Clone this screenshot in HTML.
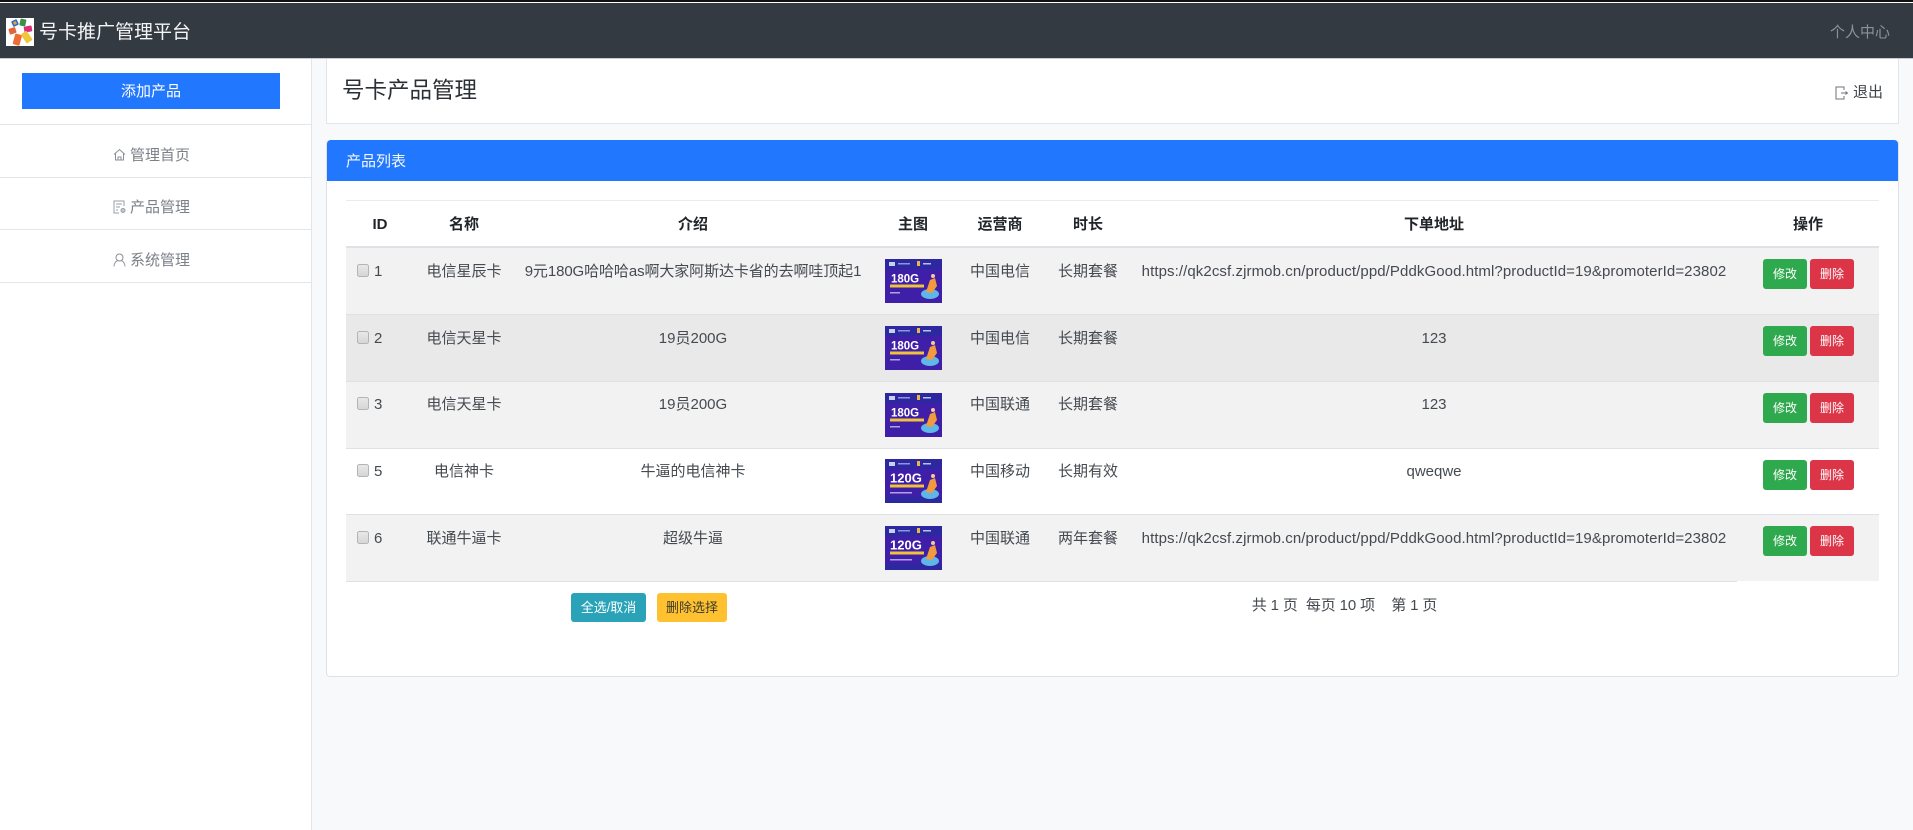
<!DOCTYPE html>
<html lang="zh">
<head>
<meta charset="utf-8">
<title>号卡产品管理</title>
<style>
html,body{margin:0;padding:0}
body{width:1913px;height:830px;position:relative;overflow:hidden;background:#f8f9fa;font-family:"Liberation Sans","Noto Sans CJK SC",sans-serif;font-size:15px;color:#212529}
.a{position:absolute;box-sizing:border-box}
.t{position:absolute;white-space:nowrap;line-height:20px;height:20px}
.c{position:absolute;white-space:nowrap;line-height:20px;height:20px;transform:translateX(-50%)}
.th{font-weight:700;color:#212529;margin-top:1px}
.td{color:#454a50;margin-top:1px}
.url{letter-spacing:.085px}
.row{position:absolute;left:346px;width:1533px}
.cb{position:absolute;width:12px;height:13px;left:357px;box-sizing:border-box;border:1px solid #b4b4b4;border-radius:2.5px;background:linear-gradient(#e8e8e8,#d6d6d6)}
.b{position:absolute;box-sizing:border-box;border-radius:3px;text-align:center;color:#fff;font-size:12px;line-height:31px;height:30px;width:44px}
.g{background:#2fa94e}.r{background:#dc3548}
.line{position:absolute;left:0;width:311px;height:1px;background:#e3e6e8}
.m{color:#7b8188;margin-top:1px}
svg{position:absolute;display:block}
svg.p{filter:blur(.3px)}
</style>
</head>
<body>
<div class="a" style="left:0;top:0;width:1913px;height:2px;background:#111"></div>
<div class="a" style="left:0;top:2px;width:1913px;height:1px;background:#fff"></div>
<div class="a" style="left:0;top:3px;width:1913px;height:55px;background:#343a42"></div>
<div class="a" style="left:0;top:58px;width:1913px;height:1px;background:#c9cccf"></div>

<svg style="left:6px;top:18px" width="28" height="28" viewBox="0 0 28 28">
<rect width="28" height="28" fill="#fff"/>
<rect x="6" y="2" width="6" height="6" rx="1" fill="#2b6cc4" transform="rotate(-25 9 5)"/>
<rect x="7.5" y="3.5" width="3" height="3" fill="#e8a33a" transform="rotate(-25 9 5)"/>
<rect x="14" y="1" width="6" height="7" rx="1" fill="#3c8f4a" transform="rotate(12 17 4)"/>
<rect x="18" y="8" width="8" height="6" rx="1" fill="#d8307c" transform="rotate(-10 22 11)"/>
<rect x="3" y="10" width="7" height="6" rx="1" fill="#e0653a" transform="rotate(-18 6 13)"/>
<rect x="8" y="16" width="7" height="11" rx="1" fill="#ef6b35" transform="rotate(15 11 21)"/>
<rect x="17" y="14" width="7" height="11" rx="1" fill="#f0c63c" transform="rotate(-35 20 19)"/>
</svg>
<div class="t" style="left:39px;top:21px;font-size:19px;line-height:23px;height:23px;color:#f4f5f6">号卡推广管理平台</div>
<div class="t" style="left:1830px;top:23px;color:#8e9296">个人中心</div>

<!-- Sidebar -->
<div class="a" style="left:0;top:59px;width:312px;height:771px;background:#fff;border-right:1px solid #e3e6e8"></div>
<div class="a" style="left:22px;top:73px;width:258px;height:36px;background:#2277ff"></div>
<div class="c" style="left:151px;top:82px;color:#fff">添加产品</div>
<div class="line" style="top:124px"></div>
<div class="line" style="top:177px"></div>
<div class="line" style="top:229px"></div>
<div class="line" style="top:282px"></div>

<svg style="left:113px;top:148px" width="13" height="13" viewBox="0 0 13 13" fill="none" stroke="#8b9096" stroke-width="1">
<path d="M1 6.5 6.5 1.5 12 6.5M2.5 5.5V12H10.5V5.5M5 12V9H8V12"/>
</svg>
<div class="t m" style="left:130px;top:145px">管理首页</div>
<svg style="left:113px;top:200px" width="13" height="14" viewBox="0 0 13 14" fill="none" stroke="#9a9fa5" stroke-width="1">
<path d="M11 6V1H1V13H6M3 4H9M3 7H7M3 10H5"/><circle cx="10" cy="10.5" r="2" fill="#c4c7cb"/>
</svg>
<div class="t m" style="left:130px;top:197px">产品管理</div>
<svg style="left:113px;top:253px" width="13" height="14" viewBox="0 0 13 14" fill="none" stroke="#8b9096" stroke-width="1">
<circle cx="6.5" cy="4.5" r="3.5"/><path d="M1 13.5C1 10 3.2 8 4.6 7.6M12 13.5C12 10 9.8 8 8.4 7.6"/>
</svg>
<div class="t m" style="left:130px;top:250px">系统管理</div>

<!-- Page header -->
<div class="a" style="left:326px;top:59px;width:1573px;height:65px;background:#fff;border:1px solid #e3e6e8;border-top:0"></div>
<div class="t" style="left:342px;top:77px;font-size:22.5px;line-height:28px;height:28px;color:#2b3036">号卡产品管理</div>
<svg style="left:1835px;top:86px" width="13" height="14" viewBox="0 0 13 14" fill="none" stroke="#6f747a" stroke-width="1">
<path d="M9 4V1H1V13H9V10M6 7H12.5M10.5 5.5 12.5 7 10.5 8.5"/>
</svg>
<div class="t" style="left:1853px;top:83px;color:#3f444a">退出</div>

<!-- Card -->
<div class="a" style="left:326px;top:140px;width:1573px;height:537px;background:#fff;border:1px solid #dfe2e5;border-radius:4px"></div>
<div class="a" style="left:327px;top:140px;width:1571px;height:41px;background:#2277ff;border-radius:4px 4px 0 0"></div>
<div class="t" style="left:346px;top:152px;color:#f4f8ff">产品列表</div>

<div class="a" style="left:346px;top:200px;width:1533px;height:1px;background:#e9ecef"></div>
<div class="a" style="left:346px;top:246px;width:1533px;height:2px;background:#dee2e6"></div>

<div class="c th" style="left:380px;top:214px">ID</div>
<div class="c th" style="left:464px;top:214px">名称</div>
<div class="c th" style="left:693px;top:214px">介绍</div>
<div class="c th" style="left:913px;top:214px">主图</div>
<div class="c th" style="left:1000px;top:214px">运营商</div>
<div class="c th" style="left:1088px;top:214px">时长</div>
<div class="c th" style="left:1434px;top:214px">下单地址</div>
<div class="c th" style="left:1808px;top:214px">操作</div>

<!-- Rows -->
<div class="row" style="top:248px;height:66px;background:#f2f2f2"></div>
<div class="row" style="top:314px;height:67px;background:#e9e9e9;border-top:1px solid #dee2e6;box-sizing:border-box"></div>
<div class="row" style="top:381px;height:67px;background:#f2f2f2;border-top:1px solid #dee2e6;box-sizing:border-box"></div>
<div class="row" style="top:448px;height:66px;background:#fff;border-top:1px solid #dee2e6;box-sizing:border-box"></div>
<div class="row" style="top:514px;height:67px;background:#f2f2f2;border-top:1px solid #dee2e6;box-sizing:border-box"></div>
<div class="a" style="left:346px;top:581px;width:1391px;height:1px;background:#dee2e6"></div>

<!-- Row 1 -->
<div class="cb" style="top:264px"></div><div class="t td" style="left:374px;top:261px">1</div>
<div class="c td" style="left:464px;top:261px">电信星辰卡</div>
<div class="c td" style="left:693px;top:261px;letter-spacing:-.1px">9元180G哈哈哈as啊大家阿斯达卡省的去啊哇顶起1</div>
<svg class="p" style="left:885px;top:259px" width="57" height="44" viewBox="0 0 57 44"><rect width="57" height="44" fill="#3f1fa8"/><rect width="57" height="10" fill="#2d27a0"/><rect x="4" y="3" width="6" height="4" fill="#c8d0f0"/><rect x="13" y="4" width="12" height="1.5" fill="#8d96dc"/><rect x="32" y="2" width="3" height="5" fill="#e9b44c"/><rect x="38" y="4" width="8" height="1.5" fill="#b8c0ec"/><text x="6" y="23.5" font-family="Liberation Sans" font-size="11.5" font-weight="700" fill="#fff">180G</text><rect x="5" y="25.5" width="34" height="3" fill="#f0c23c"/><rect x="5" y="33" width="10" height="1.5" fill="#a9a6e4"/><ellipse cx="45" cy="35" rx="9" ry="5" fill="#5fb6e8"/><path d="M41 33 45 21 50 19 52 27 47 34Z" fill="#f29a3e"/><circle cx="48" cy="17" r="2" fill="#f4c9a0"/></svg>
<div class="c td" style="left:1000px;top:261px">中国电信</div>
<div class="c td" style="left:1088px;top:261px">长期套餐</div>
<div class="c td url" style="left:1434px;top:261px">https://qk2csf.zjrmob.cn/product/ppd/PddkGood.html?productId=19&amp;promoterId=23802</div>
<div class="b g" style="left:1763px;top:259px">修改</div><div class="b r" style="left:1810px;top:259px">删除</div>

<!-- Row 2 -->
<div class="cb" style="top:331px"></div><div class="t td" style="left:374px;top:328px">2</div>
<div class="c td" style="left:464px;top:328px">电信天星卡</div>
<div class="c td" style="left:693px;top:328px">19员200G</div>
<svg class="p" style="left:885px;top:326px" width="57" height="44" viewBox="0 0 57 44"><rect width="57" height="44" fill="#3f1fa8"/><rect width="57" height="10" fill="#2d27a0"/><rect x="4" y="3" width="6" height="4" fill="#c8d0f0"/><rect x="13" y="4" width="12" height="1.5" fill="#8d96dc"/><rect x="32" y="2" width="3" height="5" fill="#e9b44c"/><rect x="38" y="4" width="8" height="1.5" fill="#b8c0ec"/><text x="6" y="23.5" font-family="Liberation Sans" font-size="11.5" font-weight="700" fill="#fff">180G</text><rect x="5" y="25.5" width="34" height="3" fill="#f0c23c"/><rect x="5" y="33" width="10" height="1.5" fill="#a9a6e4"/><ellipse cx="45" cy="35" rx="9" ry="5" fill="#5fb6e8"/><path d="M41 33 45 21 50 19 52 27 47 34Z" fill="#f29a3e"/><circle cx="48" cy="17" r="2" fill="#f4c9a0"/></svg>
<div class="c td" style="left:1000px;top:328px">中国电信</div>
<div class="c td" style="left:1088px;top:328px">长期套餐</div>
<div class="c td" style="left:1434px;top:328px">123</div>
<div class="b g" style="left:1763px;top:326px">修改</div><div class="b r" style="left:1810px;top:326px">删除</div>

<!-- Row 3 -->
<div class="cb" style="top:397px"></div><div class="t td" style="left:374px;top:394px">3</div>
<div class="c td" style="left:464px;top:394px">电信天星卡</div>
<div class="c td" style="left:693px;top:394px">19员200G</div>
<svg class="p" style="left:885px;top:393px" width="57" height="44" viewBox="0 0 57 44"><rect width="57" height="44" fill="#3f1fa8"/><rect width="57" height="10" fill="#2d27a0"/><rect x="4" y="3" width="6" height="4" fill="#c8d0f0"/><rect x="13" y="4" width="12" height="1.5" fill="#8d96dc"/><rect x="32" y="2" width="3" height="5" fill="#e9b44c"/><rect x="38" y="4" width="8" height="1.5" fill="#b8c0ec"/><text x="6" y="23.5" font-family="Liberation Sans" font-size="11.5" font-weight="700" fill="#fff">180G</text><rect x="5" y="25.5" width="34" height="3" fill="#f0c23c"/><rect x="5" y="33" width="10" height="1.5" fill="#a9a6e4"/><ellipse cx="45" cy="35" rx="9" ry="5" fill="#5fb6e8"/><path d="M41 33 45 21 50 19 52 27 47 34Z" fill="#f29a3e"/><circle cx="48" cy="17" r="2" fill="#f4c9a0"/></svg>
<div class="c td" style="left:1000px;top:394px">中国联通</div>
<div class="c td" style="left:1088px;top:394px">长期套餐</div>
<div class="c td" style="left:1434px;top:394px">123</div>
<div class="b g" style="left:1763px;top:393px">修改</div><div class="b r" style="left:1810px;top:393px">删除</div>

<!-- Row 5 -->
<div class="cb" style="top:464px"></div><div class="t td" style="left:374px;top:461px">5</div>
<div class="c td" style="left:464px;top:461px">电信神卡</div>
<div class="c td" style="left:693px;top:461px">牛逼的电信神卡</div>
<svg class="p" style="left:885px;top:459px" width="57" height="44" viewBox="0 0 57 44"><rect width="57" height="44" fill="#3f1fa8"/><rect width="57" height="10" fill="#2d27a0"/><rect y="38" width="57" height="6" fill="#2d27a0"/><rect x="4" y="3" width="6" height="4" fill="#c8d0f0"/><rect x="13" y="4" width="12" height="1.5" fill="#8d96dc"/><rect x="32" y="2" width="3" height="5" fill="#e9b44c"/><rect x="38" y="4" width="8" height="1.5" fill="#b8c0ec"/><text x="5" y="23.5" font-family="Liberation Sans" font-size="13" font-weight="700" fill="#fff">120G</text><rect x="5" y="25.5" width="34" height="3" fill="#f0c23c"/><rect x="5" y="33" width="22" height="1.5" fill="#a9a6e4"/><ellipse cx="45" cy="35" rx="9" ry="5" fill="#5fb6e8"/><path d="M41 33 45 21 50 19 52 27 47 34Z" fill="#f29a3e"/><circle cx="48" cy="17" r="2" fill="#f4c9a0"/></svg>
<div class="c td" style="left:1000px;top:461px">中国移动</div>
<div class="c td" style="left:1088px;top:461px">长期有效</div>
<div class="c td" style="left:1434px;top:461px">qweqwe</div>
<div class="b g" style="left:1763px;top:460px">修改</div><div class="b r" style="left:1810px;top:460px">删除</div>

<!-- Row 6 -->
<div class="cb" style="top:531px"></div><div class="t td" style="left:374px;top:528px">6</div>
<div class="c td" style="left:464px;top:528px">联通牛逼卡</div>
<div class="c td" style="left:693px;top:528px">超级牛逼</div>
<svg class="p" style="left:885px;top:526px" width="57" height="44" viewBox="0 0 57 44"><rect width="57" height="44" fill="#3f1fa8"/><rect width="57" height="10" fill="#2d27a0"/><rect y="38" width="57" height="6" fill="#2d27a0"/><rect x="4" y="3" width="6" height="4" fill="#c8d0f0"/><rect x="13" y="4" width="12" height="1.5" fill="#8d96dc"/><rect x="32" y="2" width="3" height="5" fill="#e9b44c"/><rect x="38" y="4" width="8" height="1.5" fill="#b8c0ec"/><text x="5" y="23.5" font-family="Liberation Sans" font-size="13" font-weight="700" fill="#fff">120G</text><rect x="5" y="25.5" width="34" height="3" fill="#f0c23c"/><rect x="5" y="33" width="22" height="1.5" fill="#a9a6e4"/><ellipse cx="45" cy="35" rx="9" ry="5" fill="#5fb6e8"/><path d="M41 33 45 21 50 19 52 27 47 34Z" fill="#f29a3e"/><circle cx="48" cy="17" r="2" fill="#f4c9a0"/></svg>
<div class="c td" style="left:1000px;top:528px">中国联通</div>
<div class="c td" style="left:1088px;top:528px">两年套餐</div>
<div class="c td url" style="left:1434px;top:528px">https://qk2csf.zjrmob.cn/product/ppd/PddkGood.html?productId=19&amp;promoterId=23802</div>
<div class="b g" style="left:1763px;top:526px">修改</div><div class="b r" style="left:1810px;top:526px">删除</div>

<!-- Footer -->
<div class="a" style="left:571px;top:593px;width:75px;height:29px;background:#2aa3b9;border-radius:3px;color:#fff;font-size:13px;line-height:29px;text-align:center">全选/取消</div>
<div class="a" style="left:657px;top:593px;width:70px;height:29px;background:#ffc130;border-radius:3px;color:#3a3a2a;font-size:13px;line-height:29px;text-align:center">删除选择</div>
<div class="c td" style="left:1344.5px;top:595px;white-space:pre;letter-spacing:-.12px">共 1 页  每页 10 项    第 1 页</div>
</body>
</html>
